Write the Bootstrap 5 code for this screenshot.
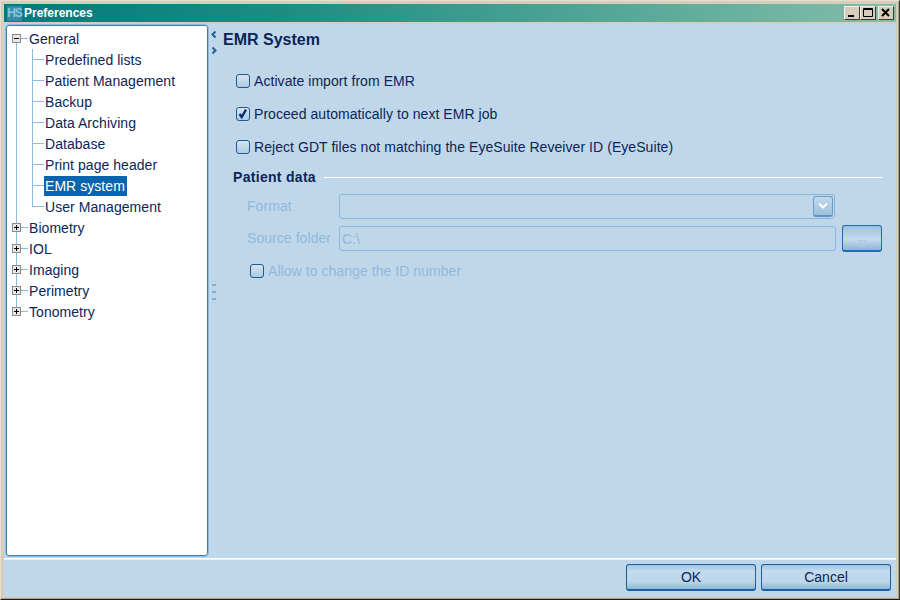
<!DOCTYPE html>
<html lang="en"><head><meta charset="utf-8"><title>Preferences</title>
<link href="https://cdn.jsdelivr.net/npm/bootstrap@5.3.0/dist/css/bootstrap.min.css" rel="stylesheet">
<style>
html,body{margin:0;height:100%;overflow:hidden}
body{font-family:"Liberation Sans",Arial,sans-serif;font-size:14px;color:#0b2559;background:#c0d7ea}
.win{width:900px;height:600px;background:#d6cdbb;border-right:1px solid #3a3a34;border-bottom:1px solid #1c1c18;border-top:1px solid #e6dfd0;border-left:1px solid #e6dfd0;padding:3px 3px 2px 3px;box-shadow:inset -1px -1px 0 #a8a08e}
.titlebar{height:18px;flex:none;background:linear-gradient(90deg,#007a7c 0%,#1b8c82 30%,#85bda9 100%);color:#fff;font-weight:700;font-size:12px;padding-left:3px;margin-bottom:2px}
.hs-logo{width:15px;height:15px;background:#2f8fa8;color:#8fc3dc;font-size:12px;font-weight:700;line-height:15px;text-align:center;letter-spacing:-1px;margin-right:2px}
.wbtn{width:16px;height:14px;background:#d6cdbb;border:1px solid;border-color:#f2eee4 #3d3a33 #3d3a33 #f2eee4;padding:0}
.wbtn svg{display:block;margin:auto}
.wbtn-x{margin:0 2px 0 2px}
.client{flex:1 1 auto;min-height:0;background:#c0d7ea}
.upper{height:535px;flex:none;border-bottom:1px solid #fff;box-shadow:0 1px 0 #e8f1f8}
.treebox{width:202px;flex:none;margin:1px 0 2px 2px;background:#fff;border:1px solid #3f7ea8;outline:1px solid #8fbbdc;border-radius:3px;padding-top:2px;font-size:14px;letter-spacing:.05px}
.node{height:21px;display:flex;align-items:center;background-repeat:no-repeat;white-space:nowrap}
.rootline{background-image:linear-gradient(#8fbbdc,#8fbbdc);background-size:1px 100%;background-position:9px 0}
.rootline-last{background-size:1px 50%;background-position:9px 0}
.rootline-first{background-size:1px 50%;background-position:9px 100%}
.expander{width:9px;height:9px;border:1px solid #8a8a8a;background:#e8e8e8;margin-left:5px;flex:none;display:block}
.hook{width:7px;height:1px;background:#8fbbdc;flex:none}
.hook-c{width:12px;height:1px;background:#8fbbdc;flex:none}
.childnode{padding-left:25px;background-image:linear-gradient(#8fbbdc,#8fbbdc),linear-gradient(#8fbbdc,#8fbbdc);background-size:1px 100%,1px 100%;background-position:9px 0,25px 0}
.childnode.final{background-size:1px 100%,1px 50%}
.childtext{padding:0 1px;line-height:20px}
.selnode{background:#0a63ad;color:#fff;padding:0 2px 0 1px}
.sash{width:15px;flex:none;padding-top:6px;color:#1f63a8}
.sash svg{display:block}
.sash-gap{margin-top:5px}
.sash-dots{margin-top:225px}
.pane{flex:1 1 auto;padding-right:14px;letter-spacing:.06px}
.pane-h{font-size:16px;font-weight:700;margin:5px 0 0 0;line-height:22px;letter-spacing:0}
.opt{height:20px;margin-left:13px;gap:4px}
.opt-a{margin-top:20px}.opt-b{margin-top:13px}.opt-c{margin-top:13px}
.cbox{appearance:none;width:14px;height:14px;flex:none;margin:0;border:1px solid #1d5a95;border-radius:3px;background:linear-gradient(#d6e5f2,#aecbe3)}
.cbox-on{background-image:url("data:image/svg+xml,%3Csvg xmlns='http://www.w3.org/2000/svg' viewBox='0 0 14 14'%3E%3Cpath d='M3 7l2.500 3.500L10.500 2' fill='none' stroke='%230b2f6b' stroke-width='2.800'/%3E%3C/svg%3E"),linear-gradient(#d6e5f2,#aecbe3)}
.grouphead{margin:10px 0 0 10px;height:20px;gap:8px;font-weight:700;letter-spacing:.3px}
.grouphead i{flex:1;height:1px;background:#fff;display:block}
.dis{color:#8fb9dc}
.row-fmt{margin-top:7px;height:25px}
.row-src{margin-top:6px;height:27px}
.row-allow{margin:9px 0 0 27px;height:20px}
.lbl{width:92px;margin-left:24px;flex:none}
.fld{border:1px solid #87b6de;border-radius:3px;background:transparent;color:#8fb9dc;font-size:14px;padding:0 2px;min-width:0;box-shadow:none}
.fld:disabled{background:transparent}
.combo{height:25px;width:496px;flex:none;padding-right:1px}
.inp{height:25px;width:497px;flex:none}
.arrowbtn{width:20px;height:21px;border:1px solid #6ba0cc;border-bottom:2px solid #5c95c6;border-radius:3px;background:linear-gradient(#c2d9ec,#9dc0dd)}
.morebtn{width:40px;height:27px;margin-left:6px;padding:0;border:1px solid #1d6bb0;border-bottom-width:2px;border-radius:3px;background:linear-gradient(#9cc0de,#c4dbee 55%,#8fb7d9);color:#8cb6da;font-size:9px;line-height:22px}
.footer{height:38px;flex:none;padding:5px 5px 0 0;gap:5px}
.dlgbtn{width:130px;height:27px;padding:1px 0 0;font-size:14px;color:#0b2559;border:1px solid #1c5f9e;border-bottom-width:2px;border-radius:3px;background:linear-gradient(#9fc3e0 0,#c4dbee 25%,#bcd6ea 70%,#8db6d8 100%);--bs-btn-hover-bg:#c4dbee}
</style></head><body>
<div class="win d-flex flex-column">
 <div class="titlebar d-flex align-items-center">
  <span class="hs-logo">HS</span><span class="flex-grow-1">Preferences</span>
  <button class="wbtn" aria-label="Minimize"><svg width="14" height="12"><rect x="3" y="8" width="6" height="2" fill="#000"/></svg></button>
  <button class="wbtn" aria-label="Maximize"><svg width="14" height="12"><path d="M2.500 1.500h9v8h-9zM2.500 2.500h9" fill="none" stroke="#000"/></svg></button>
  <button class="wbtn wbtn-x" aria-label="Close"><svg width="14" height="12"><path d="M3 2l7 7M10 2l-7 7" stroke="#000" stroke-width="2"/></svg></button>
 </div>
 <div class="client d-flex flex-column">
  <div class="upper d-flex">
   <div class="treebox">
    <div class="node rootline rootline-first"><span class="expander"><svg width="7" height="7" class="d-block"><path d="M1 3.500h5" stroke="#000"/></svg></span><span class="hook"></span><span class="childtext">General</span></div>
    <div class="node childnode"><span class="hook-c"></span><span class="childtext">Predefined lists</span></div>
    <div class="node childnode"><span class="hook-c"></span><span class="childtext">Patient Management</span></div>
    <div class="node childnode"><span class="hook-c"></span><span class="childtext">Backup</span></div>
    <div class="node childnode"><span class="hook-c"></span><span class="childtext">Data Archiving</span></div>
    <div class="node childnode"><span class="hook-c"></span><span class="childtext">Database</span></div>
    <div class="node childnode"><span class="hook-c"></span><span class="childtext">Print page header</span></div>
    <div class="node childnode"><span class="hook-c"></span><span class="childtext selnode">EMR system</span></div>
    <div class="node childnode final"><span class="hook-c"></span><span class="childtext">User Management</span></div>
    <div class="node rootline"><span class="expander"><svg width="7" height="7" class="d-block"><path d="M1 3.500h5M3.500 1v5" stroke="#000"/></svg></span><span class="hook"></span><span class="childtext">Biometry</span></div>
    <div class="node rootline"><span class="expander"><svg width="7" height="7" class="d-block"><path d="M1 3.500h5M3.500 1v5" stroke="#000"/></svg></span><span class="hook"></span><span class="childtext">IOL</span></div>
    <div class="node rootline"><span class="expander"><svg width="7" height="7" class="d-block"><path d="M1 3.500h5M3.500 1v5" stroke="#000"/></svg></span><span class="hook"></span><span class="childtext">Imaging</span></div>
    <div class="node rootline"><span class="expander"><svg width="7" height="7" class="d-block"><path d="M1 3.500h5M3.500 1v5" stroke="#000"/></svg></span><span class="hook"></span><span class="childtext">Perimetry</span></div>
    <div class="node rootline rootline-last"><span class="expander"><svg width="7" height="7" class="d-block"><path d="M1 3.500h5M3.500 1v5" stroke="#000"/></svg></span><span class="hook"></span><span class="childtext">Tonometry</span></div>
   </div>
   <div class="sash">
    <svg width="14" height="11"><path d="M6.500 1.500L3.500 4.500l3 3" transform="translate(1 0)" fill="none" stroke="#1c5da5" stroke-width="2"/></svg>
    <svg class="sash-gap" width="14" height="11"><path d="M3.500 1.500l3 3-3 3" transform="translate(1 0)" fill="none" stroke="#1c5da5" stroke-width="2"/></svg>
    <svg class="sash-dots" width="14" height="18"><path d="M4 2.500l2 1 2-1M4 9.500l2 1 2-1M4 16.500l2 1 2-1" fill="none" stroke="#3f86c4"/></svg>
   </div>
   <div class="pane">
    <h1 class="pane-h">EMR System</h1>
    <div class="opt opt-a d-flex align-items-center"><input class="cbox" type="checkbox" aria-label="Activate import from EMR"><span>Activate import from EMR</span></div>
    <div class="opt opt-b d-flex align-items-center"><input class="cbox cbox-on" type="checkbox" aria-label="Proceed"><span>Proceed automatically to next EMR job</span></div>
    <div class="opt opt-c d-flex align-items-center"><input class="cbox" type="checkbox" aria-label="Reject"><span>Reject GDT files not matching the EyeSuite Reveiver ID (EyeSuite)</span></div>
    <div class="grouphead d-flex align-items-center"><span>Patient data</span><i></i></div>
    <div class="row-fmt d-flex align-items-center dis"><span class="lbl">Format</span><div class="fld combo d-flex align-items-center justify-content-end"><span class="arrowbtn d-flex align-items-center justify-content-center"><svg width="12" height="10"><path d="M2 2.500l4 4 4-4" fill="none" stroke="#fff" stroke-width="2"/></svg></span></div></div>
    <div class="row-src d-flex align-items-center dis"><span class="lbl">Source folder</span><input class="fld inp" value="C:\" disabled aria-label="Source folder"><button class="morebtn">...</button></div>
    <div class="row-allow d-flex align-items-center dis gap-1"><input class="cbox" type="checkbox" disabled aria-label="Allow"><span>Allow to change the ID number</span></div>
   </div>
  </div>
  <div class="footer d-flex justify-content-end">
   <button class="btn dlgbtn">OK</button><button class="btn dlgbtn">Cancel</button>
  </div>
 </div>
</div>
</body></html>
